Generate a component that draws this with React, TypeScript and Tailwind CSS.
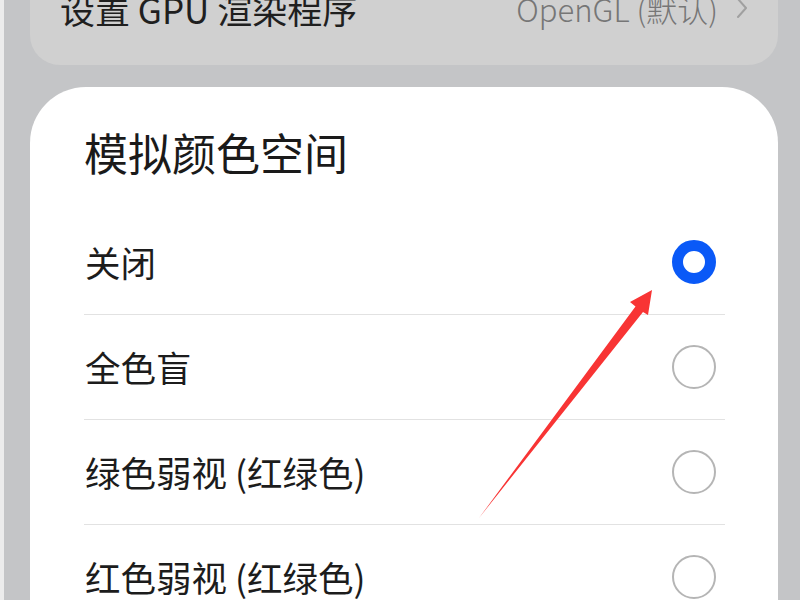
import React from "react";

const font = { fontFamily: '"Noto Sans CJK SC", "Noto Sans", sans-serif' };

const options = [
  { label: "关闭", checked: true },
  { label: "全色盲", checked: false },
  { label: "绿色弱视 (红绿色)", checked: false },
  { label: "红色弱视 (红绿色)", checked: false },
];

const Radio: React.FC<{ checked: boolean }> = ({ checked }) =>
  checked ? (
    <div className="w-[44px] h-[44px] rounded-full border-[11px] border-[#0a59f7] bg-white mr-[9px]" />
  ) : (
    <div className="w-[44px] h-[44px] rounded-full border-2 border-[#b5b5b5] bg-white mr-[9px]" />
  );

const App: React.FC = () => {
  return (
    <div
      className="relative w-[800px] h-[600px] overflow-hidden bg-[#c4c5c7] flex"
      style={font}
    >
      {/* left light edge */}
      <div className="w-[4px] h-full bg-[#ececec] shrink-0" />

      <div className="flex-1 flex flex-col pl-[26px] pr-[22px]">
        {/* previous settings card (cut off at top) */}
        <div className="shrink-0 h-[65px] bg-[#d0d0d0] rounded-b-[30px] px-[30px] overflow-hidden">
          <div className="flex items-center justify-between h-[40px] -mt-[12px]">
            <span className="text-[35px] leading-none text-[#1f1f1f]">
              设置 GPU 渲染程序
            </span>
            <div className="flex items-center gap-[18px]">
              <span className="text-[31px] leading-none font-light text-[#767676]">
                OpenGL (默认)
              </span>
              <svg width="12" height="22" viewBox="0 0 12 22" fill="none">
                <path
                  d="M2 2L10 11L2 20"
                  stroke="#a0a0a0"
                  strokeWidth="2"
                  strokeLinecap="round"
                  strokeLinejoin="round"
                />
              </svg>
            </div>
          </div>
        </div>

        {/* color space dialog */}
        <div className="shrink-0 mt-[22px] bg-white rounded-t-[56px] pl-[54px] pr-[53px]">
          <div className="h-[123px] pt-[43px]">
            <h1 className="text-[44px] leading-none text-[#1a1a1a] font-normal">
              模拟颜色空间
            </h1>
          </div>
          {options.map((o) => (
            <div
              key={o.label}
              className="h-[105px] flex items-center justify-between border-b border-[#e2e2e2]"
            >
              <span className="text-[35.5px] leading-none text-[#1c1c1c] pl-px">
                {o.label}
              </span>
              <Radio checked={o.checked} />
            </div>
          ))}
        </div>
      </div>

      {/* red annotation arrow */}
      <svg
        className="absolute left-0 top-0 pointer-events-none"
        width="800"
        height="600"
        viewBox="0 0 800 600"
      >
        <polygon
          points="652,290 630,302 635.5,306.5 479,518 643,312 648,315"
          fill="#f83434"
        />
      </svg>
    </div>
  );
};

export default App;
